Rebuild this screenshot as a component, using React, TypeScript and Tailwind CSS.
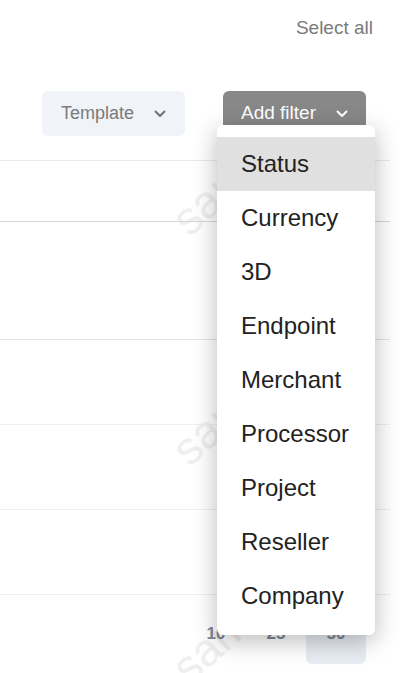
import React from "react";

const items = ["Status", "Currency", "3D", "Endpoint", "Merchant", "Processor", "Project", "Reseller", "Company"];

function Chevron({ color }: { color: string }) {
  return (
    <svg width="12" height="8" viewBox="0 0 12 8" fill="none">
      <path d="M1.5 1.5l4.5 4.5 4.5-4.5" stroke={color} strokeWidth="2" strokeLinecap="round" strokeLinejoin="round" />
    </svg>
  );
}

function Watermark({ top, left }: { top: number; left: number }) {
  return (
    <span
      className="pointer-events-none absolute -rotate-[42deg] text-[46px] text-[#efefef] select-none"
      style={{ top, left }}
    >
      sample
    </span>
  );
}

export default function App() {
  return (
    <main className="relative h-[673px] w-[402px] overflow-hidden bg-white font-['Liberation_Sans',Arial,sans-serif]">
      <Watermark top={-95} left={150} />
      <Watermark top={142} left={160} />
      <Watermark top={372} left={160} />
      <Watermark top={590} left={160} />

      <div className="relative">
        <div className="flex justify-end pr-[29px] pt-[16px]">
          <span className="text-[19px] leading-[24px] text-[#7b7b7b]">Select all</span>
        </div>

        <div className="mt-[51px] flex justify-end gap-[38px] pr-[36px]">
          <button className="flex h-[45px] w-[143px] items-center justify-center gap-[20px] rounded-[6px] bg-[#f0f4f9] text-[18px] text-[#7a7a7a]">
            Template
            <Chevron color="#6f6f6f" />
          </button>
          <button className="flex h-[45px] w-[143px] items-center justify-center gap-[20px] rounded-[6px] bg-[#888888] text-[19px] text-white">
            Add filter
            <Chevron color="#ffffff" />
          </button>
        </div>

        <div className="mr-[12px]">
          <div className="h-[25px] border-b border-[#e6eaef]" />
          <div className="h-[61px] border-b border-[#d6d6d6]" />
          <div className="h-[118px] border-b border-[#dfe4ea]" />
          <div className="h-[85px] border-b border-[#efeef5]" />
          <div className="h-[85px] border-b border-[#efeef5]" />
          <div className="h-[85px] border-b border-[#efeef5]" />
        </div>

        <div className="mt-[9px] flex justify-end pr-[36px] text-[17px] font-bold text-[#7a8896]">
          <div className="flex h-[60px] w-[60px] items-center justify-center">10</div>
          <div className="flex h-[60px] w-[60px] items-center justify-center">25</div>
          <div className="flex h-[60px] w-[60px] items-center justify-center rounded-[6px] bg-[#e8edf3]">50</div>
        </div>
      </div>

      <div className="absolute left-[217px] top-[125px] w-[158px] rounded-[6px] bg-white py-[12px] shadow-[0_6px_24px_rgba(0,0,0,0.28)]">
        {items.map((item) => (
          <div
            key={item}
            className={"flex h-[54px] items-center pl-[24px] text-[24px] text-[#222222] " + (item === "Status" ? "bg-[#e0e0e0]" : "")}
          >
            {item}
          </div>
        ))}
      </div>
    </main>
  );
}
